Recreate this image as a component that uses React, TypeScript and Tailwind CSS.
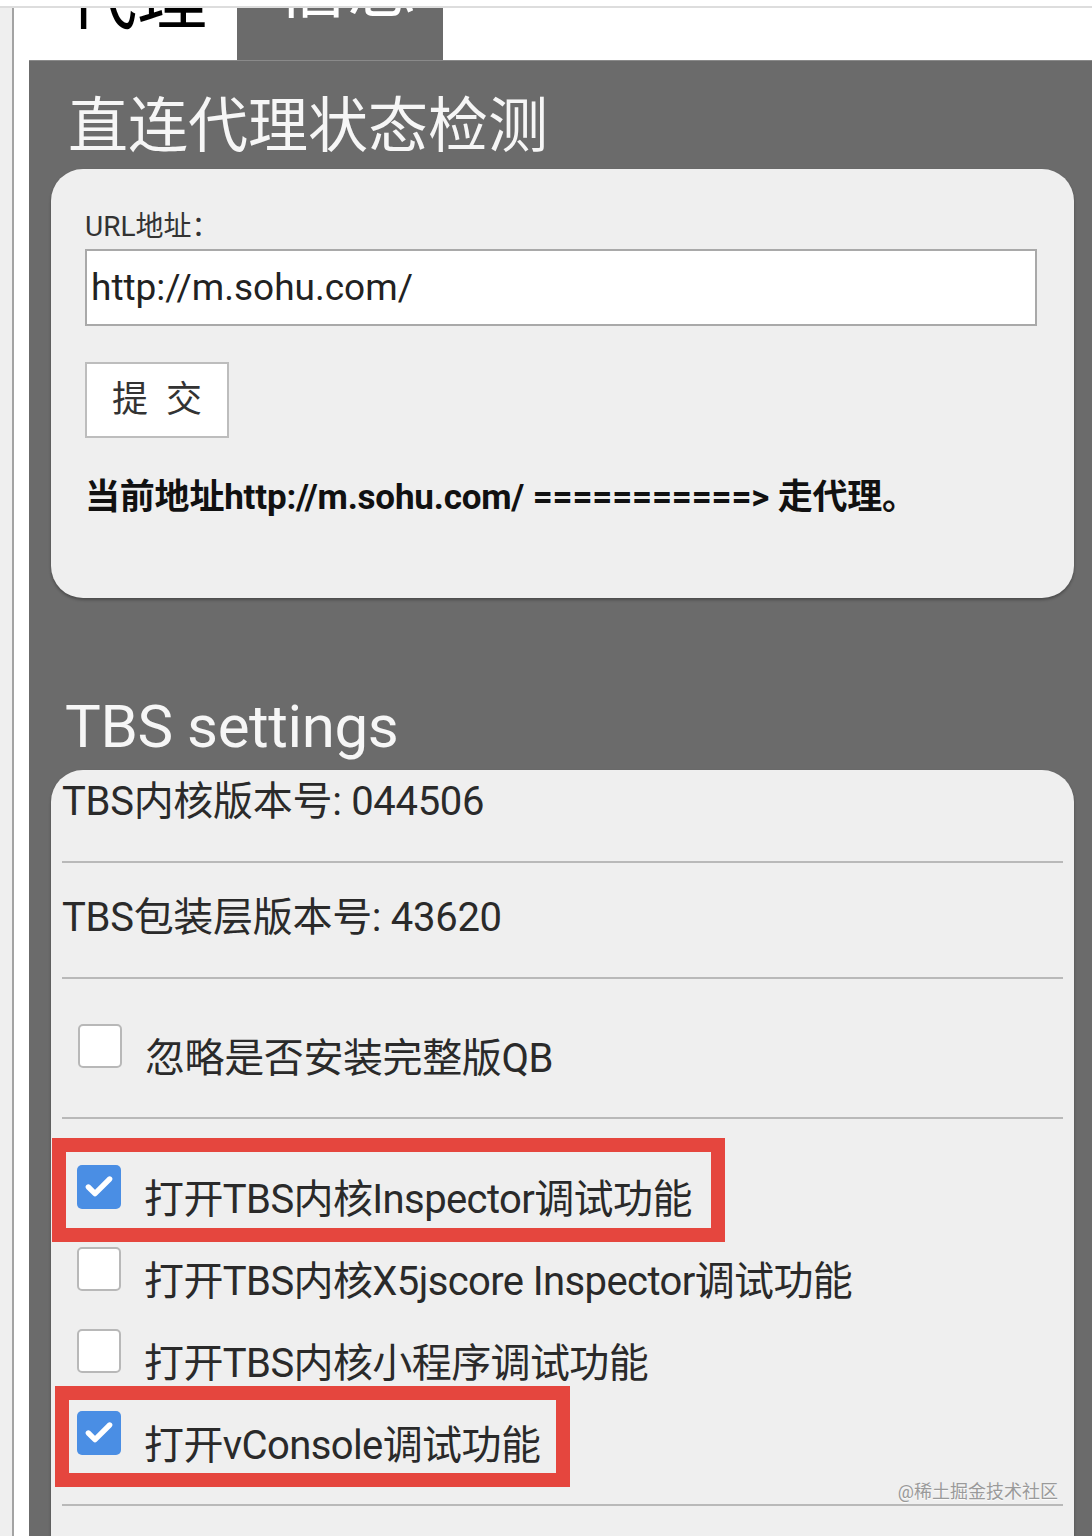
import { Check } from "lucide-react";

const font = { fontFamily: "Roboto, 'Noto Sans CJK SC', sans-serif" };

function Box({ checked }: { checked?: boolean }) {
  if (checked) {
    return (
      <div className="flex h-[44px] w-[44px] shrink-0 items-center justify-center rounded-[5px] bg-[#4a8ee4]">
        <Check className="h-[32px] w-[32px] text-white" strokeWidth={4} />
      </div>
    );
  }
  return <div className="h-[44px] w-[44px] shrink-0 rounded-[5px] border-2 border-[#b8b8b8] bg-white" />;
}

function Divider() {
  return <div className="mx-[11px] h-[2px] bg-[#b9b9b9]" />;
}

function CheckRow({ label, checked, mark }: { label: string; checked?: boolean; mark?: string }) {
  return (
    <div className="relative flex h-[82px] items-start pl-[26px]">
      {mark === "a" && (
        <div className="absolute left-[1px] top-[-27px] h-[104px] w-[673px] border-[14px] border-[#e5463e]" />
      )}
      {mark === "b" && (
        <div className="absolute left-[4px] top-[-25px] h-[101px] w-[515px] border-[14px] border-[#e5463e]" />
      )}
      <Box checked={checked} />
      <span className="ml-[23px] mt-[15px] text-[40px] leading-[40px] tracking-[-0.6px] text-[#2a2a2a]">{label}</span>
    </div>
  );
}

export default function App() {
  return (
    <div className="relative flex h-[1536px] w-[1092px] flex-col overflow-hidden bg-white" style={font}>
      <div className="h-[8px] shrink-0 border-b-2 border-[#dddddd] bg-white" />
      <div className="flex flex-1">
        <div className="w-[12px] bg-[#efefef]" />
        <div className="w-[2px] bg-[#a3a3a3]" />
        <div className="w-[15px] bg-white" />
        <div className="flex flex-1 flex-col">
          {/* tabs, text cut off by the top of the screenshot */}
          <div className="flex h-[52px] shrink-0 overflow-hidden">
            <div className="w-[208px] bg-white pl-[38px]">
              <div className="-mt-[43px] text-[70px] leading-[70px] text-black">代理</div>
            </div>
            <div className="w-[206px] bg-[#6b6b6b] pl-[40px]">
              <div className="-mt-[55px] text-[70px] leading-[70px] text-white">信息</div>
            </div>
          </div>

          {/* panel */}
          <div className="flex flex-1 flex-col border-t border-[#8a8a8a] bg-[#6b6b6b] pl-[22px] pr-[18px]">
            <h1 className="pl-[17px] pt-[36px] text-[60px] font-normal leading-[60px] text-[#f6f6f6]">
              直连代理状态检测
            </h1>
            <div className="mt-[12px] h-[429px] rounded-[32px] bg-[#efefef] pl-[34px] pt-[44px] shadow-[0_2px_3px_rgba(0,0,0,0.3)]">
              <div className="text-[28px] leading-[28px] text-[#333]">URL地址：</div>
              <div className="mt-[8px] flex h-[77px] w-[952px] items-center border-2 border-[#a9a9a9] bg-white pl-[4px] text-[37px] text-[#222]">
                http://m.sohu.com/
              </div>
              <div className="mt-[36px] flex h-[76px] w-[144px] items-center justify-center border-2 border-[#bdbdbd] bg-white text-[36px] text-[#333]">
                提&nbsp;&nbsp;交
              </div>
              <div className="mt-[40px] text-[35px] font-bold leading-[40px] tracking-[-0.2px] text-[#111]">
                当前地址http://m.sohu.com/ ===========&gt; 走代理。
              </div>
            </div>

            <h2 className="mt-[99px] pl-[14px] text-[60px] font-normal leading-[60px] tracking-[-0.4px] text-[#f6f6f6]">
              TBS settings
            </h2>
            <div className="mt-[13px] flex-1 rounded-t-[32px] bg-[#efefef] shadow-[0_2px_3px_rgba(0,0,0,0.3)]">
              <div className="pl-[11px] pt-[12px] pb-[39px] text-[40px] leading-[40px] tracking-[-0.3px] text-[#2a2a2a]">
                TBS内核版本号: 044506
              </div>
              <Divider />
              <div className="pl-[11px] pt-[35px] pb-[39px] text-[40px] leading-[40px] tracking-[-0.3px] text-[#2a2a2a]">
                TBS包装层版本号: 43620
              </div>
              <Divider />
              <div className="flex items-start pl-[27px] pt-[45px] pb-[38px]">
                <Box />
                <span className="ml-[23px] mt-[15px] text-[40px] leading-[40px] tracking-[-0.4px] text-[#2a2a2a]">
                  忽略是否安装完整版QB
                </span>
              </div>
              <Divider />
              <div className="pt-[46px]">
                <CheckRow label="打开TBS内核Inspector调试功能" checked mark="a" />
                <CheckRow label="打开TBS内核X5jscore Inspector调试功能" />
                <CheckRow label="打开TBS内核小程序调试功能" />
                <CheckRow label="打开vConsole调试功能" checked mark="b" />
              </div>
              <div className="mt-[11px]">
                <Divider />
              </div>
            </div>
          </div>
        </div>
      </div>
      <div className="absolute right-[34px] top-[1481px] text-[18px] leading-[22px] text-[#9a9a9a] [text-shadow:0_1px_1px_rgba(255,255,255,0.8)]">
        @稀土掘金技术社区
      </div>
    </div>
  );
}
